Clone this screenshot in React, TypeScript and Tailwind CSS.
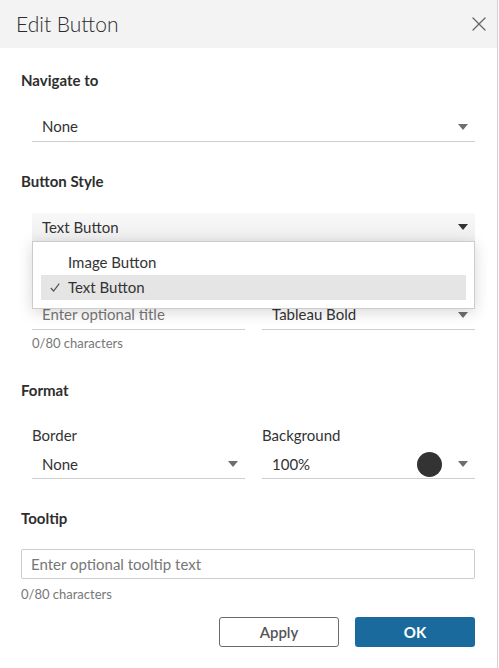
import { X } from "lucide-react";

function Caret({ dark = false }: { dark?: boolean }) {
  return (
    <svg width="10" height="6" viewBox="0 0 10 6" className="shrink-0">
      <path d="M0 0 L10 0 L5 6 Z" fill={dark ? "#333333" : "#6e6e6e"} />
    </svg>
  );
}

function LineSelect({
  value,
  className = "",
  children,
}: {
  value: string;
  className?: string;
  children?: React.ReactNode;
}) {
  return (
    <div
      className={`flex h-[29px] items-center justify-between border-b border-[#cfcfcf] pl-[10px] pr-[7px] text-[15px] text-[#333] ${className}`}>
      <span>{value}</span>
      <div className="flex items-center gap-[16px]">
        {children}
        <Caret />
      </div>
    </div>
  );
}

export default function App() {
  return (
    <div
      className="h-[668px] w-[498px] border-r border-[#d4d4d4] bg-white text-[#333]"
      style={{ fontFamily: "Lato, 'Open Sans', sans-serif" }}>
      {/* header */}
      <div className="flex h-12 items-center justify-between bg-[#f3f3f3] pl-4 pr-[6px]">
        <h1 className="text-[21px] font-light text-[#2b2b2b]">Edit Button</h1>
        <X size={24} strokeWidth={1.3} className="text-[#666]" />
      </div>

      <div className="pl-[21px] pr-[22px]">
        <p className="mt-[22px] h-5 text-[15px] leading-5 font-bold text-[#2e2e2e]">Navigate to</p>
        <LineSelect value="None" className="mt-[22px] ml-[11px] h-[30px]" />

        <p className="mt-[29px] h-5 text-[15px] leading-5 font-bold text-[#2e2e2e]">Button Style</p>
        <div className="relative ml-[11px] mt-[22px]">
          <div className="flex h-[28px] items-center justify-between bg-gradient-to-b from-[#f8f8f8] to-[#efefef] pl-[10px] pr-[7px] text-[15px] text-[#333]">
            <span>Text Button</span>
            <Caret dark />
          </div>

          {/* row hidden under the open menu */}
          <div className="mt-[34px] grid grid-cols-2 gap-[17px]">
            <p className="h-5 text-[15px] leading-5">Title</p>
            <p className="h-5 text-[15px] leading-5">Font</p>
          </div>
          <div className="mt-[5px] grid grid-cols-2 gap-[17px]">
            <div className="flex h-[30px] items-center border-b border-[#cfcfcf] pl-[10px] text-[15px] text-[#777]">
              Enter optional title
            </div>
            <LineSelect value="Tableau Bold" className="h-[30px]" />
          </div>
          <p className="mt-[5px] h-4 text-[13px] leading-4 text-[#777]">0/80 characters</p>

          {/* open menu */}
          <div className="absolute left-0 right-0 top-[28px] border border-[#cccccc] bg-white py-2 shadow-[0_3px_14px_rgba(0,0,0,0.16)]">
            <div className="mx-2 flex h-[25px] items-center pl-[27px] text-[15px] text-[#333]">
              Image Button
            </div>
            <div className="mx-2 flex h-[25px] items-center bg-[#e5e5e5] text-[15px] text-[#333]">
              <svg width="10" height="9" viewBox="0 0 10 9" className="ml-[9px] mr-[8px] shrink-0">
                <path d="M0.8 5 L3.6 8 L9.2 0.6" fill="none" stroke="#555" strokeWidth="1.2" />
              </svg>
              <span>Text Button</span>
            </div>
          </div>
        </div>

        <p className="mt-[29px] h-5 text-[15px] leading-5 font-bold text-[#2e2e2e]">Format</p>
        <div className="ml-[11px] mt-[25px] grid grid-cols-2 gap-[17px]">
          <div>
            <p className="h-5 text-[15px] leading-5 text-[#333]">Border</p>
            <LineSelect value="None" className="mt-[5px]" />
          </div>
          <div>
            <p className="h-5 text-[15px] leading-5 text-[#333]">Background</p>
            <LineSelect value="100%" className="mt-[5px]">
              <span className="h-[25px] w-[25px] rounded-full bg-[#333333]" />
            </LineSelect>
          </div>
        </div>

        <p className="mt-[29px] h-5 text-[15px] leading-5 font-bold text-[#2e2e2e]">Tooltip</p>
        <div className="mt-[21px] flex h-[30px] items-center rounded-[2px] border border-[#cccccc] pl-[9px] text-[15px] text-[#777]">
          Enter optional tooltip text
        </div>
        <p className="mt-[7px] h-4 text-[13px] leading-4 text-[#777]">0/80 characters</p>

        <div className="mt-[15px] flex justify-end gap-4">
          <button className="h-[30px] w-[120px] rounded-[3px] border border-[#6b6b6b] bg-white text-[15px] font-semibold text-[#555]">
            Apply
          </button>
          <button className="h-[30px] w-[120px] rounded-[3px] bg-[#1b6a9e] text-[15px] font-bold text-white">
            OK
          </button>
        </div>
      </div>
    </div>
  );
}
